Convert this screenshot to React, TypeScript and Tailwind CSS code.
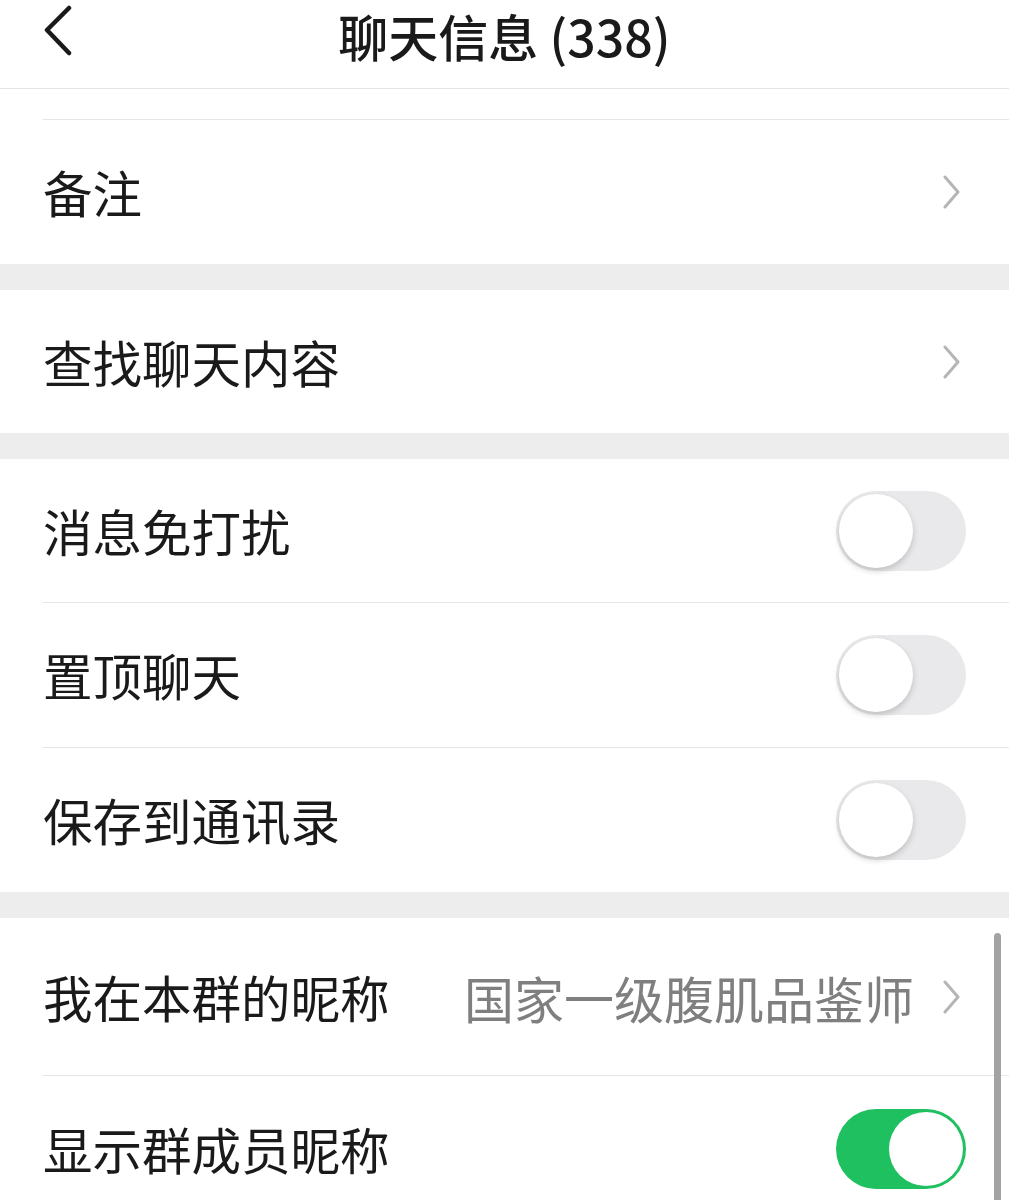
import React from "react";

const FONT = "font-['Noto_Sans_CJK_SC','Noto_Sans',sans-serif]";

function Chevron() {
  return (
    <svg width="18" height="34" viewBox="0 0 18 34" className="shrink-0 mr-[6px]">
      <polyline points="3,2 16,17 3,32" fill="none" stroke="#b5b5b5" strokeWidth="3" strokeLinecap="round" strokeLinejoin="round" />
    </svg>
  );
}

function Toggle({ on = false }: { on?: boolean }) {
  return (
    <div
      className={`relative w-[130px] h-[80px] rounded-full shrink-0 ${
        on ? "bg-[#1ec05f]" : "bg-[#e9e9eb]"
      }`}
    >
      <div
        className={`absolute top-[3px] w-[74px] h-[74px] rounded-full bg-white ${
          on ? "right-[3px]" : "left-[3px] shadow-[0_3px_6px_rgba(0,0,0,0.18)]"
        }`}
      />
    </div>
  );
}

type Row_T = {
  label: string;
  value?: string;
  kind: "link" | "toggle";
  on?: boolean;
  divider?: boolean;
  h?: string;
};

function Row({ label, value, kind, on, divider, h = "h-[144px]" }: Row_T) {
  return (
    <div className="bg-white pl-[43px]">
      <div
        className={`flex items-center ${h} pr-[43px] ${divider ? "border-b border-[#e6e6e6]" : ""}`}
      >
        <span className="text-[49.5px] leading-[1.2] text-[#1a1a1a]">{label}</span>
        <div className="flex-1" />
        {value && (
          <span className="text-[50px] leading-[1.2] text-[#7f7f7f] mr-[28px]">{value}</span>
        )}
        {kind === "link" ? <Chevron /> : <Toggle on={on} />}
      </div>
    </div>
  );
}

export default function App() {
  return (
    <div className={`relative w-[1009px] h-[1200px] overflow-hidden bg-[#ededed] ${FONT}`}>
      {/* header */}
      <div className="h-[89px] bg-white border-b border-[#e3e3e3]">
        <div className="grid grid-cols-[1fr_auto_1fr] items-center h-[70px]">
          <svg width="32" height="52" viewBox="0 0 32 52" className="ml-[42px] self-start mt-[5px]">
            <polyline points="27,3 5,25 27,48" fill="none" stroke="#1a1a1a" strokeWidth="4.5" strokeLinecap="round" strokeLinejoin="round" />
          </svg>
          <span className="text-[50px] leading-[1.1] font-medium text-[#1a1a1a]">
            聊天信息 (338)
          </span>
          <div />
        </div>
      </div>

      {/* cut-off row above */}
      <div className="bg-white pl-[43px]">
        <div className="h-[31px] border-b border-[#e6e6e6]" />
      </div>
      <Row label="备注" kind="link" />

      <div className="h-[26px]" />
      <Row label="查找聊天内容" kind="link" h="h-[143px]" />

      <div className="h-[26px]" />
      <Row label="消息免打扰" kind="toggle" divider />
      <Row label="置顶聊天" kind="toggle" divider h="h-[145px]" />
      <Row label="保存到通讯录" kind="toggle" />

      <div className="h-[26px]" />
      <Row label="我在本群的昵称" value="国家一级腹肌品鉴师" kind="link" divider h="h-[158px]" />
      <Row label="显示群成员昵称" kind="toggle" on h="h-[146px]" />

      {/* scrollbar */}
      <div className="absolute right-[8px] top-[933px] w-[7px] h-[300px] rounded-full bg-[#a3a3a3]" />
    </div>
  );
}
